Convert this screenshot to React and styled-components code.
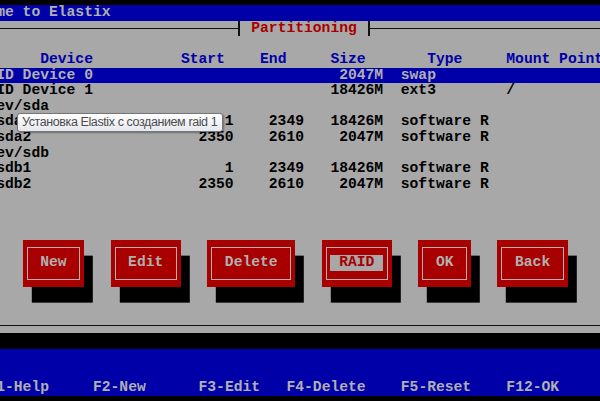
import styled, { createGlobalStyle } from 'styled-components';

// text-mode screen: 9x16 VGA cells scaled down to 8.8 x 15.65 px
const ROW = '15.65px';
const BLUE = '#0000a8';
const GREY = '#a8a8a8';
const RED = '#a80000';
const LIGHT = '#b0b0b0';

const Global = createGlobalStyle`
  html, body { margin: 0; padding: 0; background: #000; overflow: hidden; }
`;

const Page = styled.div`
  position: relative;
  width: 600px;
  height: 401px;
  padding-top: 5px;
  box-sizing: border-box;
  overflow: hidden;
  background: #000;
`;

const Screen = styled.div`
  font-family: 'Liberation Mono', 'DejaVu Sans Mono', monospace;
  font-size: 14.6667px;
  font-weight: bold;
  line-height: ${ROW};
  white-space: pre;
  width: 80ch;
  margin-left: calc(-5ch - 3.8px);
`;

const Row = styled.div`
  display: flex;
  align-items: center;
  height: ${ROW};
  background: ${(p) => p.$bg || 'transparent'};
  color: ${(p) => p.$color || '#000'};
  padding-left: ${(p) => p.$indent || 0}ch;
`;

const Window = styled.div`
  background: ${GREY};
`;

const HLine = styled.div`
  height: 1px;
  background: #111;
  flex: ${(p) => (p.$w ? `0 0 ${p.$w}ch` : '1')};
`;

const TitleBox = styled.div`
  flex: 0 0 15ch;
  box-sizing: border-box;
  height: 100%;
  border-left: 2px solid #111;
  border-right: 2px solid #111;
  color: ${RED};
  text-align: center;
`;

const Head = styled.span`
  color: ${BLUE};
  flex: 0 0 ${(p) => (p.$w ? `${p.$w}ch` : 'auto')};
  padding-left: ${(p) => p.$pad || 0}ch;
  box-sizing: border-box;
`;

const Cell = styled.span`
  flex: 0 0 ${(p) => (p.$w ? `${p.$w}ch` : 'auto')};
  text-align: ${(p) => (p.$right ? 'right' : 'left')};
  margin-left: ${(p) => p.$ml || 0}ch;
`;

const ButtonBar = styled.div`
  display: flex;
  height: calc(${ROW} * 4);
`;

const Button = styled.div`
  flex: 0 0 ${(p) => p.$w}ch;
  margin-left: ${(p) => p.$ml}ch;
  height: calc(${ROW} * 3);
  background: ${RED};
  box-shadow: 1ch ${ROW} 0 #000;
  display: flex;
`;

const ButtonFrame = styled.div`
  flex: 1;
  margin: 7px 4px 7px 4px;
  border: 1px solid ${LIGHT};
  display: flex;
  align-items: center;
  justify-content: center;
`;

const ButtonLabel = styled.span`
  color: ${(p) => (p.$focus ? RED : LIGHT)};
  background: ${(p) => (p.$focus ? GREY : 'transparent')};
  padding: 0 1ch;
  height: ${ROW};
`;

const Backdrop = styled.div`
  background: ${BLUE};
  color: ${LIGHT};
`;

const HelpItem = styled.span`
  margin-left: ${(p) => p.$ml}ch;
`;

const Tooltip = styled.div`
  position: absolute;
  left: 17px;
  top: 113px;
  width: 206px;
  height: 19px;
  box-sizing: border-box;
  padding: 0 4px;
  border: 1px solid #767676;
  border-radius: 3px;
  background: linear-gradient(#ffffff, #e6e8f0);
  box-shadow: 1px 1px 2px rgba(0, 0, 0, 0.35);
  font-family: 'Liberation Sans', Arial, sans-serif;
  font-size: 12.5px;
  letter-spacing: -0.4px;
  line-height: 17px;
  color: #4c4c4c;
  white-space: nowrap;
`;

const rows = [
  { dev: 'RAID Device 0', start: '', end: '', size: '2047M', type: 'swap', mount: '', sel: true },
  { dev: 'RAID Device 1', start: '', end: '', size: '18426M', type: 'ext3', mount: '/' },
  { dev: '/dev/sda' },
  { dev: '  sda1', start: '1', end: '2349', size: '18426M', type: 'software R' },
  { dev: '  sda2', start: '2350', end: '2610', size: '2047M', type: 'software R' },
  { dev: '/dev/sdb' },
  { dev: '  sdb1', start: '1', end: '2349', size: '18426M', type: 'software R' },
  { dev: '  sdb2', start: '2350', end: '2610', size: '2047M', type: 'software R' },
];

const buttons = [
  { label: 'New', ml: 8 },
  { label: 'Edit', ml: 3 },
  { label: 'Delete', ml: 3 },
  { label: 'RAID', ml: 3, focus: true },
  { label: 'OK', ml: 3 },
  { label: 'Back', ml: 3 },
];

const help = [
  ['F1-Help', 4],
  ['F2-New', 5],
  ['F3-Edit', 6],
  ['F4-Delete', 3],
  ['F5-Reset', 4],
  ['F12-OK', 4],
];

const Blank = () => <Row />;

export default function App() {
  return (
    <Page>
      <Global />
      <Screen>
        <Row $bg={BLUE} $color={LIGHT}>Welcome to Elastix</Row>
        <Window>
          <Row>
            <HLine $w={32.5} />
            <TitleBox>Partitioning</TitleBox>
            <HLine />
          </Row>
          <Blank />
          <Row>
            <Head $w={26} $pad={10}>Device</Head>
            <Head $w={9}>Start</Head>
            <Head $w={8}>End</Head>
            <Head $w={11}>Size</Head>
            <Head $w={9}>Type</Head>
            <Head>Mount Point</Head>
          </Row>
          {rows.map((r) => (
            <Row key={r.dev} $indent={3} $bg={r.sel ? BLUE : undefined} $color={r.sel ? LIGHT : '#000'}>
              <Cell $w={23}>{r.dev}</Cell>
              <Cell $w={6} $right>{r.start}</Cell>
              <Cell $w={8} $right>{r.end}</Cell>
              <Cell $w={9} $right>{r.size}</Cell>
              <Cell $w={12} $ml={2}>{r.type}</Cell>
              <Cell>{r.mount}</Cell>
            </Row>
          ))}
          <Blank />
          <Blank />
          <Blank />
          <ButtonBar>
            {buttons.map((b) => (
              <Button key={b.label} $w={b.label.length + 4} $ml={b.ml}>
                <ButtonFrame>
                  <ButtonLabel $focus={b.focus}>{b.label}</ButtonLabel>
                </ButtonFrame>
              </Button>
            ))}
          </ButtonBar>
          <Blank />
          <Row>
            <HLine />
          </Row>
        </Window>
        <Row $bg="#000" />
        <Backdrop>
          <Blank />
          <Blank />
          <Row $color={LIGHT}>
            {help.map(([t, ml]) => (
              <HelpItem key={t} $ml={ml}>{t}</HelpItem>
            ))}
          </Row>
        </Backdrop>
      </Screen>
      <Tooltip>Установка Elastix с созданием raid 1</Tooltip>
    </Page>
  );
}
